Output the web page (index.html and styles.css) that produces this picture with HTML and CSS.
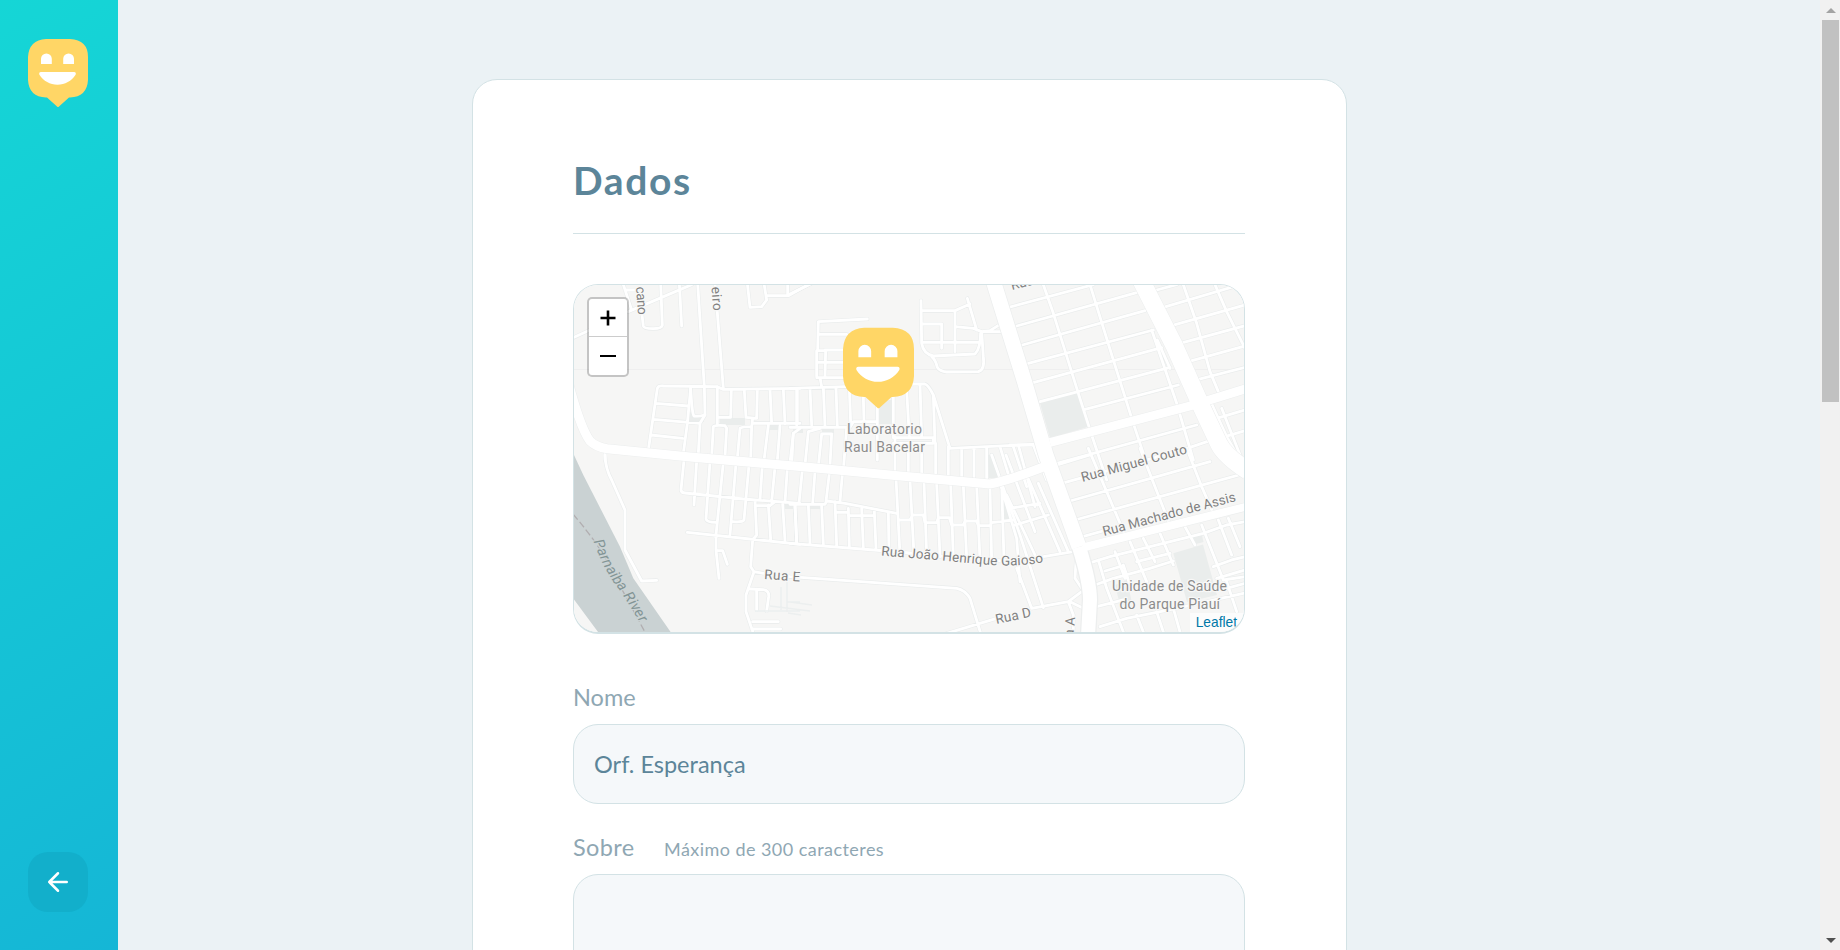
FILE: index.html
```html
<!DOCTYPE html>
<html lang="pt-BR">
<head>
<meta charset="utf-8">
<title>Happy</title>
<link rel="stylesheet" href="styles.css">
</head>
<body>
<svg class="defs" width="0" height="0" aria-hidden="true">
  <symbol id="happy" viewBox="0 0 60 68">
    <path fill="#ffd666" d="M18 0H42Q60 1 60 18V41Q59 58 42 58.500H41L31 67.500Q30 68.500 29 67.500L19 58.500H18Q1 58 0 41V18Q1 1 18 0Z"/>
    <path fill="#fff" d="M13 25V19.800a5.400 5.400 0 0 1 10.800 0V25ZM35.200 25V19.800a5.400 5.400 0 0 1 10.800 0V25ZM13 33H46Q48.500 33.300 47.600 35.700C43.500 42 37 45.700 29.500 45.700C22 45.700 15.500 42 11.400 35.700Q10.500 33.300 13 33Z"/>
  </symbol>
</svg>
<div class="page">
  <aside class="sidebar">
    <svg class="logo"><use href="#happy"/></svg>
    <button class="back" type="button" aria-label="Voltar">
      <svg width="30" height="30" viewBox="0 0 24 24" fill="none" stroke="#fff" stroke-width="2" stroke-linecap="round" stroke-linejoin="round"><path d="M19 12H5M12 19l-7-7 7-7"/></svg>
    </button>
  </aside>
  <main class="content">
    <form class="card">
      <h1 class="legend">Dados</h1>
      <div class="map">
        <svg class="tiles" viewBox="574 285 670 347">
          <defs>
            <g id="streets">
              <g transform="translate(570 280) scale(.33333)">
                <path d="M12 172L60 150M175 95L365 14M160 14L185 90M165 30H195M215 95L220 138Q222 146 250 146Q275 146 277 136L272 10M328 10L335 138M383 10L403 320L405 402Q400 410 372 408Q366 400 362 325M435 10L460 325M532 10L540 82L575 80L590 60L582 10M590 47H655L690 28L760 -10M653 10V45"/>
                <path d="M235 510L262 325Q265 316 280 318L440 320L460 328L690 325M442 320V435M257 370L355 378M250 418L390 430M243 465L338 475M362 325L352 430L340 520M405 405L390 430L385 520M425 530L430 440Q435 434 465 437L470 445L465 530M484 332L482 412H445M523 332L528 412L560 415L562 332M548 430H690M600 328L605 430M640 328L645 432M682 328V432M502 535L510 445Q515 440 545 440L548 415M545 440L542 538M595 435L582 542M630 438L622 542M690 445L670 460L660 548M105 515V540"/>
              </g>
              <g transform="translate(570 455) scale(.33333)">
                <path d="M105 0Q106 40 125 75L165 165V285L215 378L260 376M342 15L333 105Q334 114 345 114L520 132L690 145M380 18L372 150M420 20L408 192Q410 202 438 202M460 22L438 240V285L447 370M498 25L480 240M537 30L522 195Q518 202 488 200M577 32L570 135M615 36L605 140M652 40L645 142M352 232L690 268M438 287H458L472 328M555 135L560 240L548 255L542 335L552 350L528 420V470L550 535M555 152H600L615 140M595 150L602 252M638 148L645 258M675 150L680 260M552 350L580 355M540 402L580 404Q598 407 596 425L590 468M560 405V465M548 500H625M545 522H632"/>
              </g>
              <g transform="translate(790 280) scale(.33333)">
                <path d="M0 42L75 5M80 290V212H105M83 212L85 125L232 117M85 163H170M105 210H170M85 247H165M80 293H165M107 210L105 290M90 293L95 320M0 325L165 320L375 312H405Q415 315 430 345L480 505L690 495L790 490M20 325V435M60 325L65 435M100 322L105 440M138 322L142 440M178 322L182 430M220 350L222 425M262 380V540M310 350V470M350 330L358 470M390 312L395 470M430 345L435 490M0 442H180L190 425H260M5 555L10 460M45 555L55 455L90 445M85 560L95 462H125L120 555M170 445L160 570M310 473H430V490H310M315 470V580M355 490V580M395 490V580M437 490V580M475 500V590M515 505V590M552 505V590M590 500V595M630 500L660 600M670 500L710 620"/>
                <path d="M393 62L395 190Q400 222 430 228L555 222Q572 205 572 155H640M395 92H495V215M495 92L540 72M532 55L560 150M395 132H455V205M495 140L550 145L575 155L600 152L635 130M395 187H565M425 230Q437 240 442 262Q450 275 470 276L565 275Q585 270 580 230L575 155"/>
              </g>
              <g transform="translate(790 455) scale(.33333)">
                <path d="M37 45L27 145M75 50L68 145M118 55L108 140M157 60L150 140M0 148H105L110 138L165 145L320 175M15 150L20 262M55 150L60 265M95 152L100 268M135 140L140 270M175 160L178 275M215 160L220 278M140 172H175M175 182H250M253 168L258 280M295 172L297 290M318 70L330 300M360 75L372 300M402 80L410 300M440 85L450 305M482 88L490 308M520 90L530 310M560 92L570 315M600 100L605 318M635 90L642 315M325 195H360L368 180H400L405 203H440L445 188H478L485 210H520L525 198H560L565 212H600L605 203L670 195M605 0L690 240L760 458M648 0L735 230M0 265L290 288L640 318L760 305L850 290M-30 362L0 365L500 400Q525 405 540 430L572 535M470 535L620 490L665 480M632 90L680 250L690 380"/>
              </g>
              <g transform="translate(1010 280) scale(.33333)">
                <path d="M-50 -5L20 10M-15 85L250 14M20 138L380 38M37 195L405 92M55 250L430 150M70 308L455 203M90 365L480 262M225 388L505 315M440 30L500 14M460 82L705 10M485 137L705 75M510 190L705 137M535 245L705 198M565 298L705 262M100 14L130 100L205 340L245 465L290 600M240 14L310 240L370 430L410 550M425 150L500 370L550 540M442 180L480 265M520 14L560 130L600 275L625 335M615 14L650 95L705 205M130 553L560 435M620 415L705 390M645 470L705 452M540 502L600 482M602 365L650 470L690 540M635 385L700 550M0 495H90M25 495L75 680M70 495L110 600"/>
              </g>
              <g transform="translate(1010 455) scale(.33333)">
                <path d="M125 35L240 0M155 85L500 -10M180 138L430 68L600 20M195 195L570 92L705 55M210 247L300 222M235 -20L345 240M390 -20L425 70L480 210M530 -20L575 95L610 175M-10 120L75 300M15 210L115 180M0 160L90 145M50 60L150 290M85 85L175 290M20 340L65 460L175 440L215 410M180 440L220 460M175 440L190 480V531M200 290L195 370L215 400M235 325L300 305L580 235L650 210L705 200M265 315L290 400L340 531M315 290L345 370M360 260L410 380M400 250L435 320M450 235L490 330M525 215L555 270M575 210L640 375M625 195L665 300M655 190L690 275M255 390L310 370L420 340L490 318M285 348L340 332M380 320L480 295M610 335L665 315L705 305M620 370L705 345M640 375L705 365M650 400L705 385M260 455L340 435M270 515L350 490L500 460L700 415M380 480L400 531M440 470L460 531M490 460L510 531M650 380L680 470M340 330L365 405"/>
              </g>
            </g>
            <path id="gaioso" d="M881 555.500L930 559.500L990 565Q1020 567 1044 562"/>
            <path id="parnaiba" d="M593.500 541Q602 566 615 584T643 628"/>
          </defs>
          <path fill="#f6f6f5" d="M570 280h680v360H570z"/>
          <path fill="#eaedec" d="M1040 403.300L1076.700 393.300L1088.300 426.700L1050 438.300ZM1173.300 553.300L1203 544.500L1217 595L1187 602ZM1192.500 535L1201.500 533L1203.500 542L1194 544.500ZM878 400H892V424H878ZM720 418H745V425H720ZM768 425H781V430H768ZM793 428H803V433H793ZM822 428H834V433H822ZM785 504H794V509H785ZM810 504H824V509H810ZM988 455H994L1001 478H989ZM1003 490L1013 520H1003ZM1115 585L1127 580L1132 603L1120 605ZM690 412L704 417V422H688Z"/>
          <path fill="#cad2d3" d="M570 440L574 455L583.300 475L620 546.700L633.300 578.300L672 634H599.500L570 594Z"/>
          <path fill="none" stroke="#b1aeb0" stroke-width="1.300" stroke-dasharray="7 3" d="M573 514Q602 548 612 571L646 634"/>
          <path stroke="#efefef" d="M570 369.500H1250"/>
          <use href="#streets" class="casing"/>
          <use href="#streets" class="street"/>
          <g class="avenues avenue-edge">
            <path stroke-width="10" d="M569 385Q581 429 590 441Q596 447 607 448.700L690 457L800 466.500L895 475.500L990 484Q1010 480 1046 466M1050 442.500L1190 406L1245 389"/>
            <path stroke-width="9" d="M1083 547.500L1245 507"/>
            <path stroke-width="16.500" d="M993 280L1024 380L1046 455L1079 547Q1090 582 1090 600L1088 636"/>
            <path stroke-width="18.500" d="M1141 280L1174 345L1203 410L1219 444Q1225 456 1248 471"/>
          </g>
          <g class="avenues">
            <path stroke-width="9" d="M569 385Q581 429 590 441Q596 447 607 448.700L690 457L800 466.500L895 475.500L990 484Q1010 480 1046 466M1050 442.500L1190 406L1245 389"/>
            <path stroke-width="8" d="M1083 547.500L1245 507"/>
            <path stroke-width="15" d="M993 280L1024 380L1046 455L1079 547"/>
            <path stroke-width="14" d="M1079 547Q1090 582 1090 600L1088 636"/>
            <path stroke-width="17.500" d="M1141 280L1174 345L1203 410L1219 444Q1225 456 1248 471"/>
          </g>
          <g class="thin"><path d="M781 587V610M787 580V612M755 611H800M787 602H800M770 606L810 611M790 602L812 605M788 613L801 615"/></g>
          <g class="labels">
            <text transform="translate(636 287) rotate(86)" textLength="28">cano</text>
            <text transform="translate(711.500 287) rotate(86)" textLength="24">eiro</text>
            <text transform="translate(1012 290) rotate(-14)">Rua</text>
            <text transform="translate(1082.500 482) rotate(-15.300)" textLength="109">Rua Miguel Couto</text>
            <text transform="translate(1104 536) rotate(-14.800)" textLength="137">Rua Machado de Assis</text>
            <text textLength="163"><textPath href="#gaioso">Rua João Henrique Gaioso</textPath></text>
            <text transform="translate(764 579) rotate(4)" textLength="36">Rua E</text>
            <text transform="translate(996.500 624) rotate(-12)" textLength="36">Rua D</text>
            <text transform="translate(1072.500 653) rotate(-86)" textLength="36">Rua A</text>
            <g class="poi">
              <text x="847" y="433.500" textLength="75">Laboratorio</text>
              <text x="844" y="451.500" textLength="81">Raul Bacelar</text>
              <text x="1112" y="591" textLength="115">Unidade de Saúde</text>
              <text x="1119.500" y="608.700" textLength="100.500">do Parque Piauí</text>
            </g>
            <text class="river" textLength="95"><textPath href="#parnaiba">Parnaiba River</textPath></text>
          </g>
        </svg>
        <div class="zoom">
          <button type="button" aria-label="Zoom in"><svg width="16" height="16"><path d="M.5 8H15.500M8 .5V15.500" stroke="#000" stroke-width="2.600"/></svg></button>
          <button type="button" aria-label="Zoom out"><svg width="16" height="16"><path d="M0 8H16" stroke="#000" stroke-width="2"/></svg></button>
        </div>
        <svg class="marker"><use href="#happy"/></svg>
        <a class="attribution">Leaflet</a>
      </div>
      <label class="label" for="name">Nome</label>
      <input class="field" id="name" value="Orf. Esperança">
      <label class="label label-about" for="about"><b>Sobre</b><span>Máximo de 300 caracteres</span></label>
      <textarea class="field about" id="about"></textarea>
    </form>
  </main>
  <div class="scrollbar"><i class="up"></i><div class="thumb"></div><i class="down"></i></div>
</div>
</body>
</html>
```
FILE: styles.css
```css
* { box-sizing: border-box; margin: 0; }
body { background: #ebf2f5; overflow: hidden; font-family: Lato, "Open Sans", sans-serif; }
.defs { position: absolute; }
.page { display: flex; height: 950px; overflow: hidden; }
.sidebar {
  flex: none; width: 118px; padding: 39px 30px 38px 28px;
  display: flex; flex-direction: column; justify-content: space-between;
  background: linear-gradient(329.54deg, #15b6d6 0%, #15d6d6 100%);
}
.logo { width: 60px; height: 68px; }
.back {
  width: 60px; height: 60px; border: 0; border-radius: 20px; padding: 0;
  background: #12afcb; display: flex; align-items: center; justify-content: center;
}
.content { flex: 1; padding: 79px 0 0 354px; }
.card {
  width: 875px; height: 1100px; padding: 74px 101px 74px 100px; background: #fff;
  border: 1px solid #d3e2e5; border-radius: 25px;
  display: flex; flex-direction: column;
}
.legend {
  height: 80px; border-bottom: 1px solid #d3e2e5; color: #5c8599;
  font-size: 39px; line-height: 52px; font-weight: 700; letter-spacing: 1.6px;
}
.map {
  flex: none; position: relative; margin-top: 50px; height: 350px; overflow: hidden;
  border: 1px solid #d3e2e5; border-bottom-width: 2px; border-radius: 25px;
}
.tiles { display: block; width: 100%; height: 347px; }
.casing, .street { fill: none; stroke-linecap: round; stroke-linejoin: round; }
.casing { stroke: #e9ecec; stroke-width: 12; }
.street { stroke: #fff; stroke-width: 8.5; }
.avenues { fill: none; stroke: #fff; stroke-linejoin: round; }
.avenue-edge { stroke: #eceeee; }
.thin { fill: none; stroke: #ecefef; stroke-width: 1.5; }
.labels {
  font-family: Roboto, sans-serif; font-size: 13.5px; fill: #808080;
  stroke: #f8f8f7; stroke-width: 2.5px; stroke-linejoin: round; paint-order: stroke;
}
.poi { fill: #8c8c8c; font-size: 14px; }
.river { font-style: italic; font-size: 14.5px; fill: #829495; stroke: #cad2d3; }
.zoom {
  position: absolute; left: 13px; top: 12px; width: 42px; height: 80px;
  border: 2px solid rgba(0, 0, 0, .2); border-radius: 5px; background: #fff; background-clip: padding-box;
}
.zoom button {
  display: flex; align-items: center; justify-content: center;
  width: 37px; height: 38px; padding: 0; border: 0; background: none;
}
.zoom button:first-child { border-bottom: 1px solid #ccc; width: 38px; height: 38px; padding: 1px 1px 0 0; }
.marker { position: absolute; left: 269px; top: 42px; width: 71px; height: 82px; }
.attribution {
  position: absolute; right: 0; bottom: 0; height: 19px; padding: 0 7px 0 6px;
  background: rgba(255, 255, 255, .7); color: #0078a8;
  font: 13.75px/19px "Liberation Sans", Arial, sans-serif;
}
.label { display: flex; align-items: baseline; height: 34px; margin: 46px 0 10px; font-size: 23.500px; line-height: 34px; color: #8fa7b3; }
.label b { font-weight: 400; width: 91px; letter-spacing: .4px; }
.label span { font-size: 18px; letter-spacing: .45px; }
.label-about { margin-top: 26px; }
.field {
  flex: none; width: 672px; height: 80px; padding: 0 20px; border: 1px solid #d3e2e5; border-radius: 25px;
  background: #f5f8fa; color: #5c8599; font: 23.500px Lato, sans-serif; outline: 0; resize: none;
}
.about { height: 200px; }
.scrollbar { width: 20px; background: #f1f1f1; display: flex; flex-direction: column; align-items: center; padding: 8px 0 7px 1px; }
.thumb { width: 17px; height: 382px; background: #c1c1c1; margin-top: 7px; }
.up, .down { border: 5px solid transparent; border-top: 0; border-bottom: 5px solid #a3a3a3; }
.down { margin-top: auto; border-bottom: 0; border-top: 5px solid #505050; }
```
